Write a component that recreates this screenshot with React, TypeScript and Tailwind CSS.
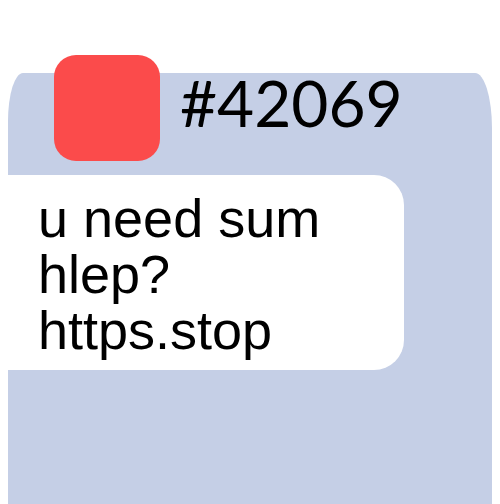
export default function App() {
  return (
    <div className="h-[504px] w-full overflow-hidden bg-white flex flex-col">
      <div className="mx-2 mt-[73px] flex-1 flex flex-col bg-[#c5cfe6] rounded-tl-[15px_48px] rounded-tr-[17px_55px]">
        {/* header: avatar + ticket number */}
        <div className="-mt-[18px] ml-[46px] flex items-start gap-5">
          <div className="w-[106px] h-[106px] shrink-0 rounded-[22px] bg-[#fb4b4b]" />
          <span className="mt-[16px] font-['Lato',sans-serif] text-[64px] leading-none text-black">
            #42069
          </span>
        </div>

        {/* message bubble */}
        <div className="mt-[14px] mr-[88px] rounded-r-[30px] bg-white pl-[30px] pt-[15px] pb-[12px]">
          <p className="font-['Liberation_Sans',Arial,sans-serif] text-[54px] leading-[56px] text-black">
            u need sum
            <br />
            hlep?
            <br />
            https.stop
          </p>
        </div>
      </div>
    </div>
  );
}
